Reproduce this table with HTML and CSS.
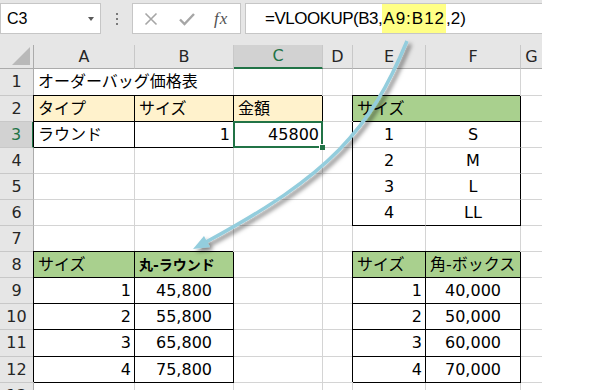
FILE: index.html
```html
<!DOCTYPE html>
<html lang="ja">
<head>
<meta charset="utf-8">
<title>VLOOKUP</title>
<link rel="stylesheet" href="styles.css">
</head>
<body>
<div class="app">
  <div class="toolbar">
    <div class="namebox"><span>C3</span><span class="dd"></span></div>
    <div class="grip"><i></i><i></i><i></i></div>
    <div class="fxbtns">
      <svg class="btn" width="22" height="22" viewBox="0 0 22 22"><path d="M5.5 5.5 L16.5 16.5 M16.5 5.5 L5.5 16.5" stroke="#a6a6a6" stroke-width="1.6" fill="none"/></svg>
      <svg class="btn" width="22" height="22" viewBox="0 0 22 22"><path d="M4 11.5 L8.5 16 L18 6" stroke="#a6a6a6" stroke-width="2.4" fill="none"/></svg>
      <span class="fx">fx</span>
    </div>
    <div class="formula"><span class="pre">=VLOOKUP(B3,</span><span class="hl">A9:B12</span><span>,2)</span></div>
  </div>
  <div class="sheet">
    <div class="c h corner"><span class="tri"></span></div>
    <div class="c h">A</div><div class="c h">B</div><div class="c h sel">C</div><div class="c h">D</div><div class="c h">E</div><div class="c h">F</div><div class="c h g">G</div>

    <div class="c h rh">1</div>
    <div class="c span2">オーダーバッグ価格表</div><div class="c"></div><div class="c"></div><div class="c"></div><div class="c"></div><div class="c g"></div>

    <div class="c h rh">2</div>
    <div class="c b or">タイプ</div><div class="c b or">サイズ</div><div class="c b or">金額</div><div class="c"></div><div class="c span2 b gr">サイズ</div><div class="c g"></div>

    <div class="c h rh rsel">3</div>
    <div class="c b">ラウンド</div><div class="c b r">1</div><div class="c b r active">45800</div><div class="c"></div><div class="c m bl">1</div><div class="c m br">S</div><div class="c g"></div>

    <div class="c h rh">4</div>
    <div class="c"></div><div class="c"></div><div class="c"></div><div class="c"></div><div class="c m bl">2</div><div class="c m br">M</div><div class="c g"></div>

    <div class="c h rh">5</div>
    <div class="c"></div><div class="c"></div><div class="c"></div><div class="c"></div><div class="c m bl">3</div><div class="c m br">L</div><div class="c g"></div>

    <div class="c h rh">6</div>
    <div class="c"></div><div class="c"></div><div class="c"></div><div class="c"></div><div class="c m bl bb">4</div><div class="c m br bb">LL</div><div class="c g"></div>

    <div class="c h rh">7</div>
    <div class="c"></div><div class="c"></div><div class="c"></div><div class="c"></div><div class="c"></div><div class="c"></div><div class="c g"></div>

    <div class="c h rh">8</div>
    <div class="c b gr">サイズ</div><div class="c b gr sm">丸-ラウンド</div><div class="c"></div><div class="c"></div><div class="c b gr">サイズ</div><div class="c b gr">角-ボックス</div><div class="c g"></div>

    <div class="c h rh">9</div>
    <div class="c b r">1</div><div class="c b m">45,800</div><div class="c"></div><div class="c"></div><div class="c b r">1</div><div class="c b m">40,000</div><div class="c g"></div>

    <div class="c h rh">10</div>
    <div class="c b r">2</div><div class="c b m">55,800</div><div class="c"></div><div class="c"></div><div class="c b r">2</div><div class="c b m">50,000</div><div class="c g"></div>

    <div class="c h rh">11</div>
    <div class="c b r">3</div><div class="c b m">65,800</div><div class="c"></div><div class="c"></div><div class="c b r">3</div><div class="c b m">60,000</div><div class="c g"></div>

    <div class="c h rh">12</div>
    <div class="c b r">4</div><div class="c b m">75,800</div><div class="c"></div><div class="c"></div><div class="c b r">4</div><div class="c b m">70,000</div><div class="c g"></div>

    <div class="c h rh last">13</div>
    <div class="c"></div><div class="c"></div><div class="c"></div><div class="c"></div><div class="c"></div><div class="c"></div><div class="c g"></div>
  </div>
  <svg class="arrow" width="542" height="390" viewBox="0 0 542 390">
    <defs>
      <filter id="sh" x="-20%" y="-20%" width="140%" height="140%">
        <feDropShadow dx="3" dy="3" stdDeviation="2" flood-color="#000" flood-opacity="0.5"/>
      </filter>
    </defs>
    <g filter="url(#sh)">
      <path d="M407,41 C370,130 330,175 206,242" fill="none" stroke="#93cddd" stroke-width="3.5"/>
      <polygon points="193,249 210,247 204,236" fill="#93cddd"/>
    </g>
  </svg>
</div>
</body>
</html>
```
FILE: styles.css
```css
html, body {
  margin: 0;
  padding: 0;
  background: #ffffff;
}

.app {
  position: relative;
  width: 542px;
  height: 390px;
  background: #e6e6e6;
  overflow: hidden;
  font-family: "DejaVu Sans", "Noto Sans CJK JP", sans-serif;
  color: #000;
}

.toolbar {
  display: flex;
  align-items: flex-start;
  height: 45px;
  padding-top: 3px;
  box-sizing: border-box;
}

.namebox {
  width: 101px;
  height: 31px;
  box-sizing: border-box;
  background: #fff;
  border: 1px solid #c6c6c6;
  display: flex;
  align-items: center;
  justify-content: space-between;
  padding: 0 6px 0 6px;
  font: 16px "Liberation Sans", "Noto Sans CJK JP", sans-serif;
}

.dd {
  width: 0;
  height: 0;
  border-top: 4px solid #595959;
  border-left: 3.5px solid transparent;
  border-right: 3.5px solid transparent;
}

.grip {
  width: 31px;
  height: 31px;
  display: flex;
  flex-direction: column;
  align-items: center;
  justify-content: center;
  gap: 3px;
}

.grip i {
  display: block;
  width: 2px;
  height: 2px;
  background: #7a7a7a;
}

.fxbtns {
  width: 109px;
  height: 31px;
  box-sizing: border-box;
  background: #fff;
  border: 1px solid #c6c6c6;
  display: flex;
  align-items: center;
  padding-left: 7px;
  gap: 14px;
}

.btn {
  display: block;
}

.fx {
  font: italic 17px "Liberation Serif", serif;
  color: #505050;
  margin-left: 2px;
  letter-spacing: 1px;
}

.formula {
  margin-left: 4px;
  flex: 1;
  height: 31px;
  box-sizing: border-box;
  background: #fff;
  border: 1px solid #c6c6c6;
  border-right: 0;
  padding-left: 19px;
  display: flex;
  align-items: stretch;
  font: 17px "Liberation Sans", sans-serif;
  line-height: 29px;
}

.pre {
  letter-spacing: -0.5px;
}

.hl {
  background: #ffff85;
  padding: 0 1px 0 1px;
  letter-spacing: 1px;
}

.sheet {
  display: grid;
  grid-template-columns: 34px 101px 99px 89px 30px 73px 95px 21px;
  grid-template-rows: 24px 27px 26px 26px 26px 26px 26px 26px 26px 26px 26px 27px 26px 26px;
  background: #fff;
}

.c {
  box-sizing: border-box;
  border-right: 1px solid #d4d4d4;
  border-bottom: 1px solid #d4d4d4;
  display: flex;
  align-items: center;
  padding: 0 4px;
  font-size: 16px;
  line-height: 20px;
  white-space: nowrap;
  min-width: 0;
}

.g {
  border-right: 0;
}

.span2 {
  grid-column: span 2;
}

.h {
  background: #e6e6e6;
  border-right-color: #c8c8c8;
  border-bottom-color: #ababab;
  justify-content: center;
  color: #262626;
  padding: 0;
}

.rh {
  border-right-color: #ababab;
  border-bottom-color: #c8c8c8;
}

.last {
  align-items: flex-start;
  padding-top: 3px;
}

.corner {
  justify-content: flex-end;
  align-items: flex-end;
  padding: 0 3px 3px 0;
  border-right-color: #ababab;
}

.tri {
  width: 0;
  height: 0;
  border-bottom: 18px solid #b9b9b9;
  border-left: 18px solid transparent;
}

.sel {
  background: #d2d2d2;
  color: #217346;
  border-bottom: 2px solid #217346;
}

.rsel {
  background: #d2d2d2;
  color: #217346;
  border-right: 2px solid #217346;
}

.r {
  justify-content: flex-end;
  padding-right: 3px;
}

.m {
  justify-content: center;
}

.or {
  background: #fff2cc;
}

.gr {
  background: #a9d08e;
}

.sm {
  font-size: 14px;
  font-weight: bold;
}

.b {
  border-right-color: #000;
  border-bottom-color: #000;
  box-shadow: -1px -1px 0 #000;
}

.bl {
  box-shadow: -1px 0 0 #000;
}

.br {
  border-right-color: #000;
}

.bb {
  border-bottom-color: #000;
}

.active {
  position: relative;
}

.active::after {
  content: "";
  position: absolute;
  top: -1px;
  left: -1px;
  right: -1px;
  bottom: -1px;
  border: 2px solid #217346;
}

.active::before {
  content: "";
  position: absolute;
  right: -3px;
  bottom: -3px;
  width: 5px;
  height: 5px;
  background: #217346;
  border-left: 1px solid #fff;
  border-top: 1px solid #fff;
  z-index: 1;
}

.arrow {
  position: absolute;
  left: 0;
  top: 0;
  pointer-events: none;
}
```
